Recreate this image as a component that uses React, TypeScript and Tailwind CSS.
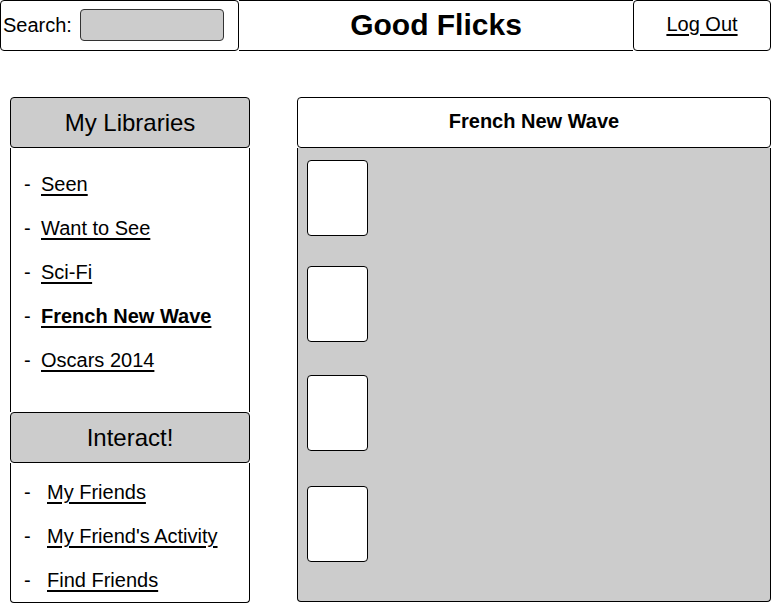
const libraries = [
  { name: "Seen" },
  { name: "Want to See" },
  { name: "Sci-Fi" },
  { name: "French New Wave", active: true },
  { name: "Oscars 2014" },
];

const friends = ["My Friends", "My Friend's Activity", "Find Friends"];

const cardTops = ["mt-[12px]", "mt-[30px]", "mt-[33px]", "mt-[35px]"];

const App = () => {
  return (
    <div className="w-[771px] h-[603px] bg-white text-black overflow-hidden font-['Liberation_Sans',Arial,sans-serif]">
      <header className="flex h-[51px]">
        <div className="w-[239px] border border-black rounded-[4px] flex items-center pl-[2px] pb-[1px] gap-[8px]">
          <span className="text-[20px]">Search:</span>
          <input
            className="w-[144px] h-[32px] bg-[#cccccc] border border-[#333] rounded-[4px] outline-none"
            type="text"
          />
        </div>
        <div className="flex-1 border-y border-black flex items-center justify-center pb-[2px]">
          <h1 className="text-[30px] font-bold">Good Flicks</h1>
        </div>
        <div className="w-[138px] border border-black rounded-[4px] flex items-center justify-center pb-[3px]">
          <a className="text-[20px] underline underline-offset-[3px]">Log Out</a>
        </div>
      </header>

      <section className="flex mt-[46px] pl-[10px] gap-[47px]">
        <aside className="w-[240px] flex flex-col">
          <div className="h-[51px] bg-[#cccccc] border border-black rounded-[4px] flex items-center justify-center text-[24px]">
            My Libraries
          </div>
          <ul className="h-[264px] border-x border-black flex flex-col gap-[22px] pt-[25px] pl-[13px]">
            {libraries.map((item, index) => (
              <li key={index} className="flex text-[20px] leading-[22px]">
                <span className="w-[17px]">-</span>
                <a className={`underline underline-offset-[3px] ${item.active ? "font-bold" : ""}`}>
                  {item.name}
                </a>
              </li>
            ))}
          </ul>
          <div className="h-[51px] bg-[#cccccc] border border-black rounded-[4px] flex items-center justify-center text-[24px]">
            Interact!
          </div>
          <ul className="h-[140px] border-x border-b border-black rounded-b-[4px] flex flex-col gap-[22px] pt-[18px] pl-[13px]">
            {friends.map((name, index) => (
              <li key={index} className="flex text-[20px] leading-[22px]">
                <span className="w-[23px]">-</span>
                <a className="underline underline-offset-[3px]">{name}</a>
              </li>
            ))}
          </ul>
        </aside>

        <main className="w-[474px] flex flex-col">
          <div className="h-[51px] border border-black rounded-[4px] bg-white flex items-center justify-center pb-[3px]">
            <h2 className="text-[20px] font-bold">French New Wave</h2>
          </div>
          <div className="h-[454px] bg-[#cccccc] border-x border-b border-black rounded-b-[4px] flex flex-col pl-[9px]">
            {cardTops.map((mt, index) => (
              <div
                key={index}
                className={`${mt} w-[61px] h-[76px] bg-white border border-black rounded-[4px]`}
              />
            ))}
          </div>
        </main>
      </section>
    </div>
  );
};

export default App;
